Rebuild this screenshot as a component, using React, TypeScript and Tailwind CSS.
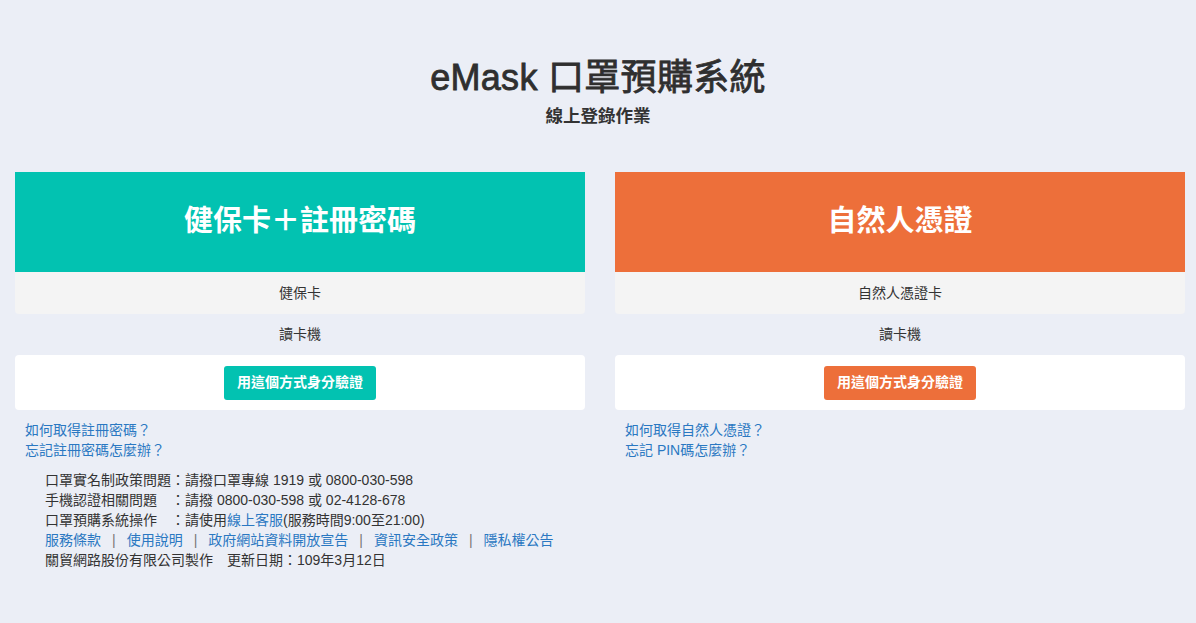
import React from "react";

const FONT = '"Liberation Sans", "Noto Sans CJK TC", sans-serif';

function Card({
  title,
  color,
  first,
  links,
}: {
  title: string;
  color: "teal" | "orange";
  first: string;
  links: string[];
}) {
  const head = color === "teal" ? "bg-[#02c2b1]" : "bg-[#ed6f3a]";
  return (
    <div className="flex flex-col">
      <div className={`${head} h-[100px] flex items-center justify-center`}>
        <span className="text-white text-[29px] font-bold">{title}</span>
      </div>
      <div className="h-[42px] bg-[#f4f4f4] rounded-b-[4px] flex items-center justify-center text-[14px] text-[#333]">
        {first}
      </div>
      <div className="h-[41px] flex items-center justify-center text-[14px] text-[#333]">
        讀卡機
      </div>
      <div className="h-[55px] bg-white rounded-[4px] flex items-center justify-center">
        <button className={`${head} h-[34px] px-[13px] rounded-[3px] text-white text-[14px] font-semibold`}>
          用這個方式身分驗證
        </button>
      </div>
      <div className="pt-[10px] pl-[10px] flex flex-col text-[14px] leading-[20px] text-[#2a78c2]">
        {links.map((l) => (
          <a key={l} href="#" className="w-fit">
            {l}
          </a>
        ))}
      </div>
    </div>
  );
}

export default function App() {
  return (
    <div className="min-h-[623px] bg-[#ebeef6] text-[#333]" style={{ fontFamily: FONT }}>
      <div className="pt-[56px] flex flex-col items-center">
        <h1 className="text-[36px] leading-[44px] font-normal tracking-[0.3px] text-[#2f2f2f] [-webkit-text-stroke:0.8px_#2f2f2f]">
          eMask 口罩預購系統
        </h1>
        <h2 className="mt-[4px] text-[17.5px] leading-[24px] font-bold text-[#333]">線上登錄作業</h2>
      </div>
      <div className="mt-[44px] pl-[15px] grid grid-cols-[570px_570px] gap-[30px]">
        <div className="flex flex-col">
          <Card
            title="健保卡＋註冊密碼"
            color="teal"
            first="健保卡"
            links={["如何取得註冊密碼？", "忘記註冊密碼怎麼辦？"]}
          />
          <div className="pt-[10px] pl-[30px] text-[14px] leading-[20px] text-[#333]">
            <div>
              <span className="inline-block w-[126px]">口罩實名制政策問題</span>：請撥口罩專線 1919 或 0800-030-598
            </div>
            <div>
              <span className="inline-block w-[126px]">手機認證相關問題</span>：請撥 0800-030-598 或 02-4128-678
            </div>
            <div>
              <span className="inline-block w-[126px]">口罩預購系統操作</span>：請使用
              <a href="#" className="text-[#2a78c2]">線上客服</a>(服務時間9:00至21:00)
            </div>
            <div className="flex text-[#2a78c2]">
              <a href="#">服務條款</a>
              <span className="px-[11px] text-[#777]">|</span>
              <a href="#">使用說明</a>
              <span className="px-[11px] text-[#777]">|</span>
              <a href="#">政府網站資料開放宣告</a>
              <span className="px-[11px] text-[#777]">|</span>
              <a href="#">資訊安全政策</a>
              <span className="px-[11px] text-[#777]">|</span>
              <a href="#">隱私權公告</a>
            </div>
            <div>關貿網路股份有限公司製作　更新日期：109年3月12日</div>
          </div>
        </div>
        <div>
          <Card
            title="自然人憑證"
            color="orange"
            first="自然人憑證卡"
            links={["如何取得自然人憑證？", "忘記 PIN碼怎麼辦？"]}
          />
        </div>
      </div>
    </div>
  );
}
